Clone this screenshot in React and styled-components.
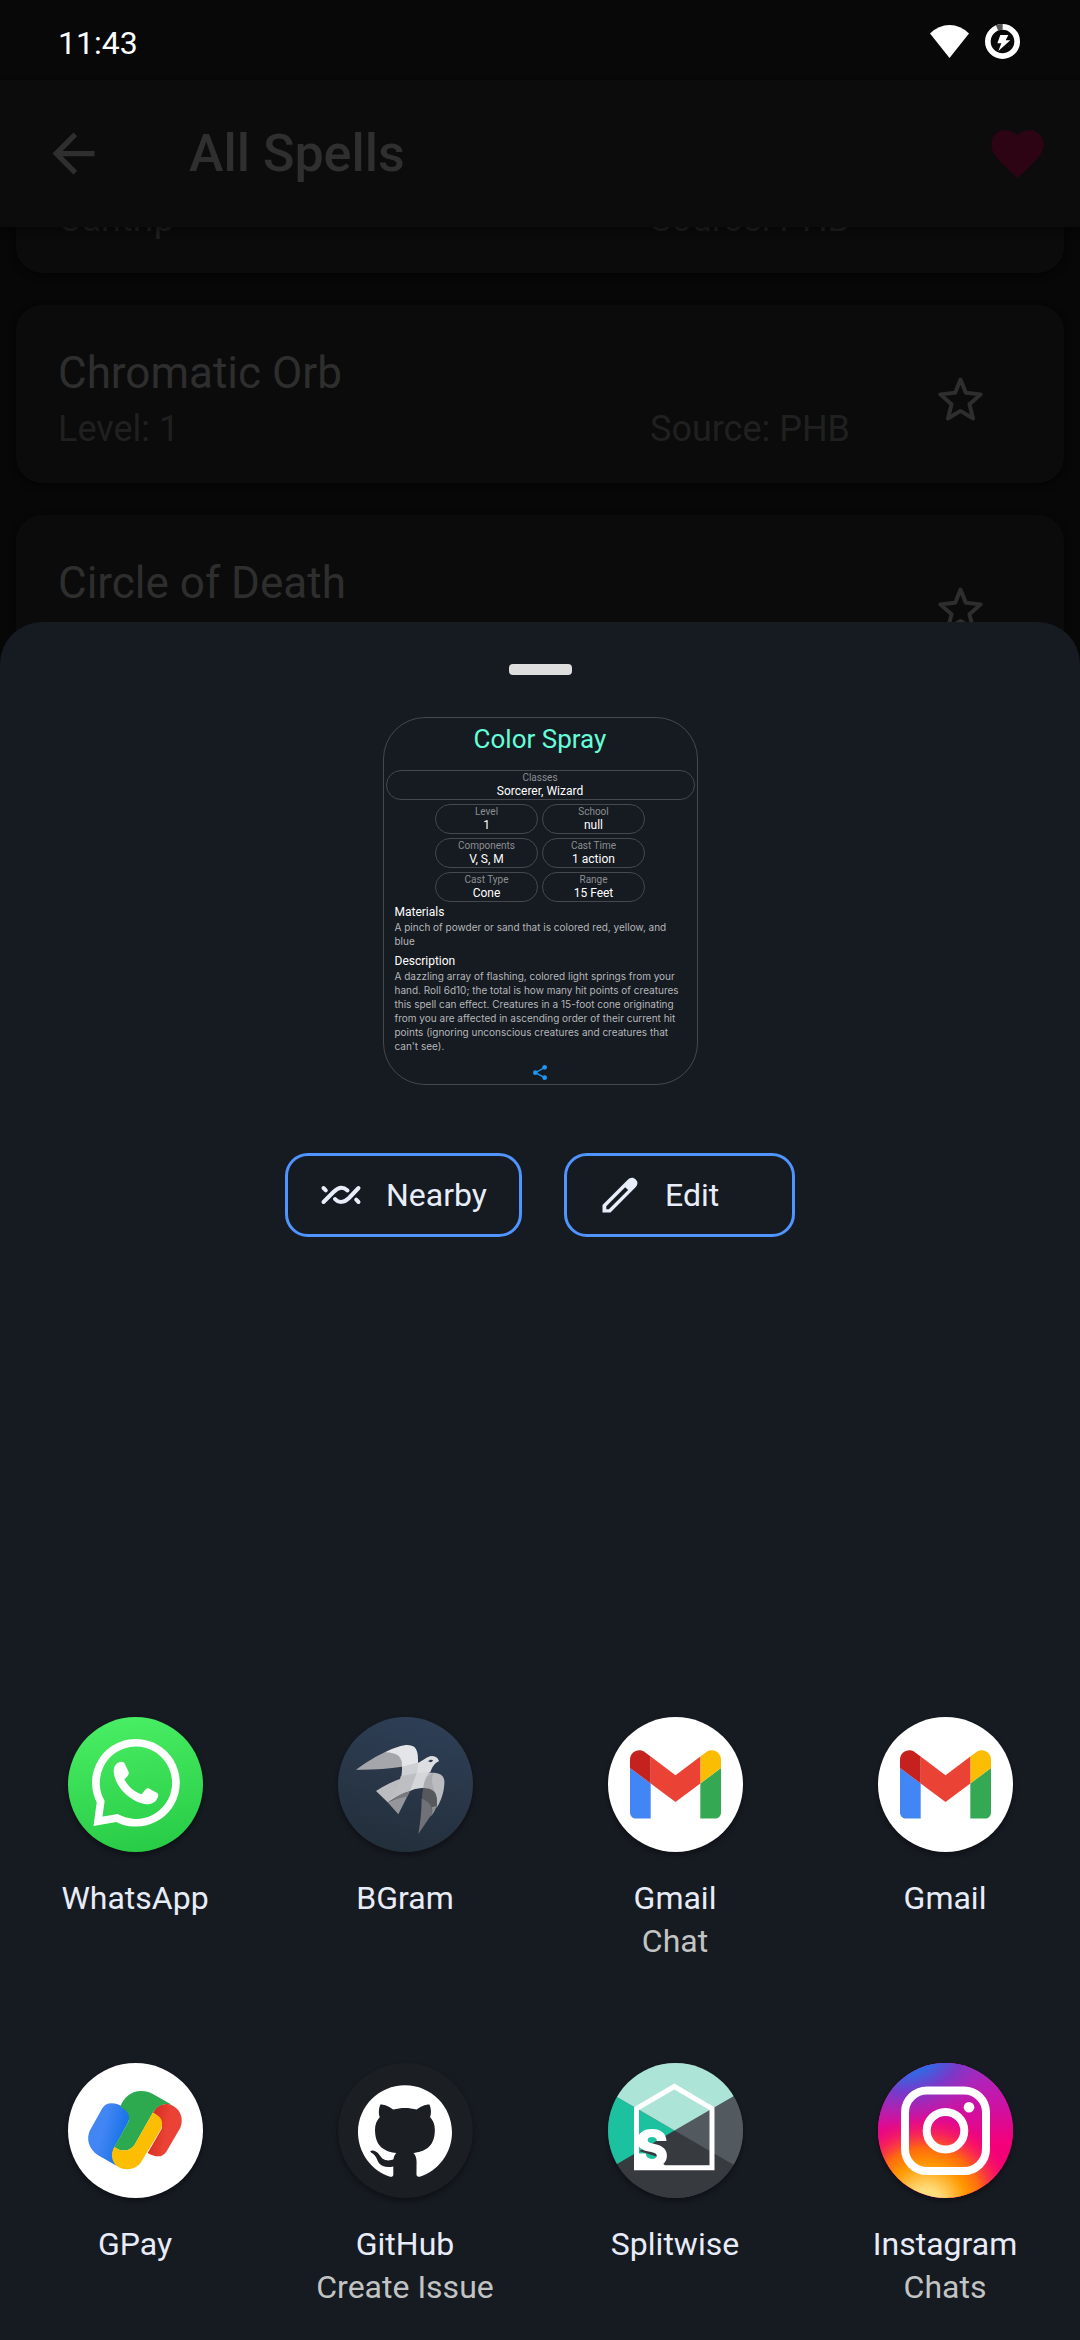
import React from "react";
import styled, { createGlobalStyle } from "styled-components";
import { SiGithub } from "react-icons/si";

const GlobalStyle = createGlobalStyle`
  * { box-sizing: border-box; }
  body {
    margin: 0;
    background: #070707;
    font-family: Roboto, "Open Sans", sans-serif;
  }
  button {
    font: inherit;
    color: inherit;
    background: none;
    border: 0;
    padding: 0;
    cursor: pointer;
  }
  h1, h2, h3, p, dl, dt, dd, ul { margin: 0; padding: 0; font-weight: 400; }
  svg { display: block; flex: none; }
`;

const Screen = styled.div`
  position: relative;
  display: flex;
  flex-direction: column;
  min-height: 100vh;
  overflow: hidden;
`;

/* The dimmed spell list that stays behind the share sheet */
const Backdrop = styled.div`
  position: absolute;
  inset: 0;
  display: flex;
  flex-direction: column;
`;

const StatusBar = styled.header`
  display: flex;
  align-items: center;
  justify-content: space-between;
  height: 80px;
  padding: 6px 60px 0 58px;
  background: #080808;
  color: #fff;
  font-size: 32px;
`;

const StatusIcons = styled.div`
  display: flex;
  align-items: center;
  gap: 16px;
  padding-bottom: 3px;
`;

const AppBar = styled.nav`
  position: relative;
  z-index: 1;
  display: flex;
  align-items: center;
  height: 147px;
  padding: 0 31px 0 42px;
  background: #0c0c0c;
  box-shadow: 0 4px 8px rgba(0, 0, 0, 0.4);
  color: #2f2f2f;
`;

const AppTitle = styled.h1`
  flex: 1;
  margin-left: 84px;
  font-size: 52px;
  font-weight: 500;
`;

const SpellList = styled.ul`
  display: flex;
  flex-direction: column;
  gap: 32px;
  margin-top: -132px;
  padding: 0 16px;
  list-style: none;
`;

const SpellCard = styled.li`
  display: grid;
  grid-template-columns: 1fr 248px 124px;
  align-items: center;
  height: 178px;
  padding: 0 42px;
  border-radius: 26px;
  background: #0b0b0b;
  box-shadow: 0 3px 6px rgba(0, 0, 0, 0.5);
`;

const SpellInfo = styled.div`
  display: grid;
  grid-column: 1 / 3;
  grid-template-columns: subgrid;
  grid-template-rows: 56px 56px;
  padding-top: 14px;
`;

const SpellName = styled.h2`
  grid-column: 1 / 3;
  font-size: 44px;
  line-height: 56px;
  color: #2e2e2e;
`;

const SpellMeta = styled.p`
  grid-row: 2;
  font-size: 36px;
  line-height: 56px;
  color: #202020;
`;

const StarButton = styled.button`
  justify-self: center;
  margin-top: 10px;
  color: #2e2e2e;
`;

const Sheet = styled.main`
  position: relative;
  flex: 1;
  display: flex;
  flex-direction: column;
  align-items: center;
  margin-top: 622px;
  padding: 42px 0 31px;
  border-radius: 42px 42px 0 0;
  background: #161a21;
`;

const Handle = styled.div`
  width: 63px;
  height: 11px;
  border-radius: 4px;
  background: #dedede;
`;

const Preview = styled.article`
  display: flex;
  flex-direction: column;
  align-items: center;
  width: 315px;
  margin-top: 42px;
  padding: 5px 2px 4px;
  border: 1px solid #45484d;
  border-radius: 42px;
`;

const PreviewTitle = styled.h2`
  font-size: 26px;
  line-height: 32px;
  color: #64ffda;
`;

const Facts = styled.dl`
  display: grid;
  grid-template-columns: 103px 103px;
  justify-content: center;
  gap: 4px;
  width: 100%;
  margin-top: 15px;
`;

const FullFacts = styled(Facts)`
  grid-template-columns: 1fr;
`;

const MoreFacts = styled(Facts)`
  margin-top: 4px;
`;

const Fact = styled.div`
  height: 30px;
  border: 1px solid #45484d;
  border-radius: 15px;
  text-align: center;
`;

const FactLabel = styled.dt`
  font-size: 10px;
  line-height: 13px;
  color: #8b8e92;
`;

const FactValue = styled.dd`
  font-size: 12px;
  line-height: 14px;
  color: #fff;
`;

const Section = styled.section`
  align-self: stretch;
  margin-top: ${(p) => p.$gap}px;
  padding: 0 8px 0 9px;
`;

const SectionTitle = styled.h3`
  font-size: 12px;
  line-height: 15px;
  color: #fff;
`;

const SectionText = styled.p`
  font-family: Inter, Roboto, sans-serif;
  font-size: 10px;
  line-height: 14px;
  color: #b4b7ba;
`;

const ShareMark = styled.svg`
  margin-top: 12px;
`;

const Actions = styled.div`
  display: flex;
  gap: 42px;
  margin: 68px 0;
`;

const ActionButton = styled.button`
  display: flex;
  align-items: center;
  gap: 24px;
  min-width: 231px;
  height: 84px;
  padding: 0 32px;
  border: 3px solid #5094ff;
  border-radius: 23px;
  font-size: 32px;
  color: #e8eef9;
`;

const AppGrid = styled.div`
  display: grid;
  grid-template-columns: repeat(4, 1fr);
  row-gap: 100px;
  width: 100%;
  margin-top: auto;
`;

const AppItem = styled.button`
  display: flex;
  flex-direction: column;
  align-items: center;
  min-height: 246px;
  font-size: 32px;
  line-height: 43px;
  color: #e8ecf8;
`;

const AppIcon = styled.span`
  display: flex;
  align-items: center;
  justify-content: center;
  width: 135px;
  height: 135px;
  margin-bottom: 25px;
  border-radius: 50%;
  overflow: hidden;
  background: ${(p) => p.$fill};
  box-shadow: 0 3px 5px rgba(0, 0, 0, 0.35);
`;

const AppDetail = styled.span`
  color: #c2c4c4;
`;

const Wifi = () => (
  <svg width="39" height="33" viewBox="0 0 39 33" fill="#fff" aria-hidden="true">
    <path d="M0 8.500Q8.500 0 19.500 0T39 8.500L19.500 33Z" />
  </svg>
);

const Battery = () => (
  <svg width="35" height="35" viewBox="0 0 105 105" aria-hidden="true">
    <circle cx="52.500" cy="52.500" r="44" fill="none" stroke="#fff" strokeWidth="17" />
    <path d="M36 11.700A44 44 0 0 1 53 8.500" fill="none" stroke="#555" strokeWidth="17" />
    <path d="M46 33H70L62 49H76L40 81L49 58H37Z" fill="#fff" />
  </svg>
);

const Back = () => (
  <svg width="63" height="63" viewBox="0 0 24 24" fill="currentColor" aria-hidden="true">
    <path d="M20 11H7.830l5.590-5.590L12 4l-8 8 8 8 1.410-1.410L7.830 13H20z" />
  </svg>
);

const Heart = () => (
  <svg width="63" height="63" viewBox="0 0 24 24" fill="#2c0413" aria-hidden="true">
    <path d="M12 21.350l-1.450-1.320C5.400 15.360 2 12.280 2 8.500 2 5.420 4.420 3 7.500 3c1.740 0 3.410.81 4.500 2.090C13.090 3.810 14.760 3 16.500 3 19.580 3 22 5.420 22 8.500c0 3.780-3.400 6.860-8.550 11.540z" />
  </svg>
);

const Star = () => (
  <svg width="45" height="44" viewBox="0 0 136 132" aria-hidden="true">
    <path
      d="M68 7L84 47L129 52L95 82L106 125L68 102L30 125L41 82L7 52L52 47Z"
      fill="none"
      stroke="currentColor"
      strokeWidth="12"
      strokeLinejoin="round"
    />
  </svg>
);

const NearbyIcon = () => (
  <svg width="42" height="42" viewBox="-1.500 -12 42 42" fill="none" stroke="currentColor" strokeWidth="4" strokeLinecap="round" aria-hidden="true">
    <path d="M2 16L12 6C17 .8 22 .8 26 4.500M13.500 13C17 17 22.500 17 27.500 12L37 2M2 2L4.300 4.300M34.700 13.700L37 16" />
  </svg>
);

const EditIcon = () => (
  <svg width="42" height="42" viewBox="-3.500 -3.500 42 42" fill="currentColor" fillRule="evenodd" aria-hidden="true">
    <path d="M0 35V27.500L25 2.500C28-.6 31-.3 33.200 1.900C35.600 4.300 35.600 7 32.800 10L8 35ZM3.800 31.800H6.300L25.600 12.600L22.700 9.800L3.800 28.800Z" />
  </svg>
);

const WhatsAppLogo = () => (
  <svg width="135" height="135" viewBox="81 51 405 405" aria-hidden="true">
    <path d="M179 305L171 364L228 354A120 120 0 1 0 179 305Z" fill="none" stroke="#fff" strokeWidth="23" />
    <path fill="#fff" d="M240 185C248 185 250 188 252 193L263 216C265 225 258 230 250 238C262 260 280 277 302 283L314 268C318 264 321 264 325 266L350 280C353 283 352 290 348 297C342 308 330 313 318 313C270 308 222 262 218 215C218 200 224 187 240 185Z" />
  </svg>
);

const BirdLogo = () => (
  <svg width="135" height="135" viewBox="891 51 405 405" aria-hidden="true">
    <path fill="#a5a6ab" d="M945 209C975 186 1010 166 1028 158C1065 153 1085 165 1083 200C1040 207 990 210 945 209Z" />
    <path fill="#e4e5e9" d="M1028 158C1060 143 1085 135 1100 135C1128 136 1132 155 1131 190L1083 202C1084 170 1070 156 1028 158Z" />
    <path fill="#dddee1" d="M1129 190C1150 180 1155 170 1173 168C1185 168 1193 177 1194 184C1180 190 1173 202 1168 217L1110 235Z" />
    <path fill="#bbbcc0" d="M1005 273C1055 240 1110 222 1160 219C1195 215 1213 225 1210 252C1208 285 1196 310 1186 325C1190 285 1185 264 1142 264C1105 265 1075 285 1040 307Z" />
    <path fill="#cfd0d3" d="M1083 200L1131 188C1131 228 1122 250 1107 273C1082 280 1060 293 1040 307C1070 275 1084 240 1083 200Z" />
    <path fill="#bebfc3" d="M1079 229L1127 219C1122 245 1116 258 1107 273C1082 280 1060 293 1040 307C1060 280 1074 258 1079 229Z" />
    <path fill="#d5d6d9" d="M1127 219L1165 217C1152 232 1148 248 1147 264C1132 263 1120 267 1107 273Z" />
    <path fill="#aaabb0" d="M1147 264C1150 240 1160 220 1184 219C1165 226 1175 250 1180 275Z" />
    <path fill="#95969b" d="M1040 307C1060 298 1085 291 1107 273L1072 343Z" />
    <path fill="#78797e" d="M1040 307C1060 293 1082 280 1107 273L1099 290C1080 292 1060 298 1040 307Z" />
    <path fill="#57585b" d="M1146 264C1186 265 1191 285 1186 322L1170 345L1142 300Z" />
    <path fill="#707176" d="M1142 296C1168 306 1178 322 1170 346L1132 402C1138 368 1142 330 1142 296Z" />
    <path fill="#8e8f93" d="M1186 318C1182 336 1174 344 1168 350C1174 340 1176 330 1172 322Z" />
    <path fill="#2b394b" d="M1161 184C1166 178 1172 178 1176 181C1174 187 1168 188 1161 184Z" />
  </svg>
);

const GmailLogo = () => (
  <svg width="91" height="69" viewBox="52 42 88 66" aria-hidden="true">
    <path fill="#4285f4" d="M58 108h14V74L52 59v43c0 3.320 2.690 6 6 6" />
    <path fill="#34a853" d="M120 108h14c3.320 0 6-2.690 6-6V59l-20 15" />
    <path fill="#fbbc04" d="M120 48v26l20-15v-8c0-7.420-8.470-11.650-14.400-7.200" />
    <path fill="#ea4335" d="M72 74V48l24 18 24-18v26L96 92" />
    <path fill="#c5221f" d="M52 51v8l20 15V48l-5.600-4.200c-5.940-4.450-14.400-.22-14.400 7.200" />
  </svg>
);

const GPayLogo = () => (
  <svg width="135" height="135" viewBox="81 68 405 405" aria-hidden="true">
    <defs>
      <linearGradient id="payBlue" x1="0" y1="0.300" x2="1" y2="0.700">
        <stop offset="0.350" stopColor="#4285f4" />
        <stop offset="0.800" stopColor="#1b74e8" />
      </linearGradient>
      <linearGradient id="payRed" x1="0" y1="0.400" x2="1" y2="0.700">
        <stop offset="0.150" stopColor="#d93025" />
        <stop offset="0.550" stopColor="#ea4335" />
      </linearGradient>
    </defs>
    <path fill="url(#payBlue)" d="M211 189C225 189 240 195 249 202C265 213 268 228 262 245L222 318C212 335 212 355 228 377L170 344C142 325 135 295 147 270L184 204C190 194 200 189 211 189Z" />
    <path fill="url(#payRed)" d="M386 192C418 203 430 235 418 262L376 334C364 352 345 352 320 338L362 265C366 245 358 228 336 218C345 196 366 187 386 192Z" />
    <path fill="#2da94f" d="M238 199C248 170 272 152 300 152C315 152 325 155 337 162L392 193C370 188 350 194 335 218L280 315C265 335 240 335 220 320L262 245C268 225 262 212 238 199Z" />
    <path fill="#fdbd00" d="M335 218C358 226 370 242 360 266L300 366C285 388 255 392 232 380C210 365 208 340 220 320C240 335 265 335 280 315Z" />
  </svg>
);

const SplitwiseLogo = () => (
  <svg width="135" height="135" viewBox="0 0 135 135" aria-hidden="true">
    <rect width="135" height="135" fill="#373a3f" />
    <path fill="#1cc29f" d="M66.500 67.500L-10 23V112Z" />
    <path fill="#52595f" d="M66.500 67.500L145 22V113Z" />
    <path fill="#ace5d7" d="M66.500 67.500L-10 23V-5H145V22Z" />
    <path fill="#1cc29f" d="M31 88L50 94V104H31Z" />
    <text x="27" y="103" fill="#fff" fontFamily="Inter, sans-serif" fontSize="50" fontWeight="900">S</text>
    <path d="M28.500 104.700V45.700L66.300 23.500L104 45.700V104.700Z" fill="none" stroke="#fff" strokeWidth="5" />
    <path fill="#fff" d="M28 92L40 104L56 101L58 106H28Z" />
  </svg>
);

const InstagramLogo = () => (
  <svg width="135" height="135" viewBox="0 0 135 135" aria-hidden="true">
    <defs>
      <linearGradient id="igBase" x1="0.700" y1="0" x2="0.750" y2="1">
        <stop offset="0" stopColor="#a02cc8" />
        <stop offset="0.350" stopColor="#d010a0" />
        <stop offset="0.600" stopColor="#f4007a" />
        <stop offset="1" stopColor="#f0006c" />
      </linearGradient>
      <radialGradient id="igWarm" gradientUnits="userSpaceOnUse" cx="48" cy="142" r="92">
        <stop offset="0" stopColor="#ffe58a" />
        <stop offset="0.180" stopColor="#ffdc78" />
        <stop offset="0.450" stopColor="#ff9800" />
        <stop offset="0.620" stopColor="#ff6a10" />
        <stop offset="0.800" stopColor="#fa2a50" stopOpacity="0.700" />
        <stop offset="1" stopColor="#f4007a" stopOpacity="0" />
      </radialGradient>
      <radialGradient id="igCool" gradientUnits="userSpaceOnUse" cx="0" cy="0" r="100" gradientTransform="translate(32 -8) rotate(-14) scale(1 .68)">
        <stop offset="0" stopColor="#0f7df2" />
        <stop offset="0.250" stopColor="#2f6ae6" />
        <stop offset="0.550" stopColor="#7a38c8" />
        <stop offset="1" stopColor="#b028b0" stopOpacity="0" />
      </radialGradient>
    </defs>
    <rect width="135" height="135" fill="url(#igBase)" />
    <rect width="135" height="135" fill="url(#igWarm)" />
    <rect width="135" height="135" fill="url(#igCool)" />
    <g fill="none" stroke="#fff" strokeWidth="8">
      <rect x="27" y="27.500" width="81" height="80.500" rx="22" />
      <circle cx="67.500" cy="67.700" r="18.800" />
    </g>
    <circle cx="91" cy="44.300" r="5.300" fill="#fff" />
  </svg>
);

const spells = [
  { level: "Cantrip" },
  { name: "Chromatic Orb", level: "Level: 1" },
  { name: "Circle of Death", level: "Level: 6" },
];

const facts = [
  ["Level", "1"],
  ["School", "null"],
  ["Components", "V, S, M"],
  ["Cast Time", "1 action"],
  ["Cast Type", "Cone"],
  ["Range", "15 Feet"],
];

const apps = [
  { name: "WhatsApp", logo: <WhatsAppLogo />, fill: "linear-gradient(170deg, #4af065, #26c944)" },
  { name: "BGram", logo: <BirdLogo />, fill: "linear-gradient(195deg, #2f4058, #222d38)" },
  { name: "Gmail", detail: "Chat", logo: <GmailLogo />, fill: "#fff" },
  { name: "Gmail", logo: <GmailLogo />, fill: "#fff" },
  { name: "GPay", logo: <GPayLogo />, fill: "#fff" },
  { name: "GitHub", detail: "Create Issue", logo: <SiGithub size={94} color="#fff" />, fill: "#1b1e22" },
  { name: "Splitwise", logo: <SplitwiseLogo />, fill: "#373a3f" },
  { name: "Instagram", detail: "Chats", logo: <InstagramLogo />, fill: "#e6007f" },
];

export default function App() {
  return (
    <>
      <GlobalStyle />
      <Screen>
        <Backdrop>
          <StatusBar>
            <time>11:43</time>
            <StatusIcons>
              <Wifi />
              <Battery />
            </StatusIcons>
          </StatusBar>
          <AppBar>
            <button aria-label="Back"><Back /></button>
            <AppTitle>All Spells</AppTitle>
            <button aria-label="Favorites"><Heart /></button>
          </AppBar>
          <SpellList>
            {spells.map((spell) => (
              <SpellCard key={spell.level}>
                <SpellInfo>
                  {spell.name && <SpellName>{spell.name}</SpellName>}
                  <SpellMeta>{spell.level}</SpellMeta>
                  <SpellMeta>Source: PHB</SpellMeta>
                </SpellInfo>
                <StarButton aria-label="Favorite"><Star /></StarButton>
              </SpellCard>
            ))}
          </SpellList>
        </Backdrop>

        <Sheet>
          <Handle />
          <Preview>
            <PreviewTitle>Color Spray</PreviewTitle>
            <FullFacts>
              <Fact>
                <FactLabel>Classes</FactLabel>
                <FactValue>Sorcerer, Wizard</FactValue>
              </Fact>
            </FullFacts>
            <MoreFacts>
              {facts.map(([label, value]) => (
                <Fact key={label}>
                  <FactLabel>{label}</FactLabel>
                  <FactValue>{value}</FactValue>
                </Fact>
              ))}
            </MoreFacts>
            <Section $gap={3}>
              <SectionTitle>Materials</SectionTitle>
              <SectionText>A pinch of powder or sand that is colored red, yellow, and blue</SectionText>
            </Section>
            <Section $gap={6}>
              <SectionTitle>Description</SectionTitle>
              <SectionText>
                A dazzling array of flashing, colored light springs from your hand. Roll 6d10; the total is
                how many hit points of creatures this spell can effect. Creatures in a 15-foot cone
                originating from you are affected in ascending order of their current hit points (ignoring
                unconscious creatures and creatures that can't see).
              </SectionText>
            </Section>
            <ShareMark width="14" height="15" viewBox="0 0 42 45" aria-hidden="true">
              <path d="M35 8L7 23L35 38" fill="none" stroke="#2196f3" strokeWidth="4" />
              <g fill="#2196f3">
                <circle cx="35" cy="7" r="7" />
                <circle cx="7" cy="23" r="7" />
                <circle cx="35" cy="38" r="7" />
              </g>
            </ShareMark>
          </Preview>
          <Actions>
            <ActionButton><NearbyIcon />Nearby</ActionButton>
            <ActionButton><EditIcon />Edit</ActionButton>
          </Actions>
          <AppGrid>
            {apps.map((app, index) => (
              <AppItem key={index}>
                <AppIcon $fill={app.fill}>{app.logo}</AppIcon>
                <span>{app.name}</span>
                {app.detail && <AppDetail>{app.detail}</AppDetail>}
              </AppItem>
            ))}
          </AppGrid>
        </Sheet>
      </Screen>
    </>
  );
}
